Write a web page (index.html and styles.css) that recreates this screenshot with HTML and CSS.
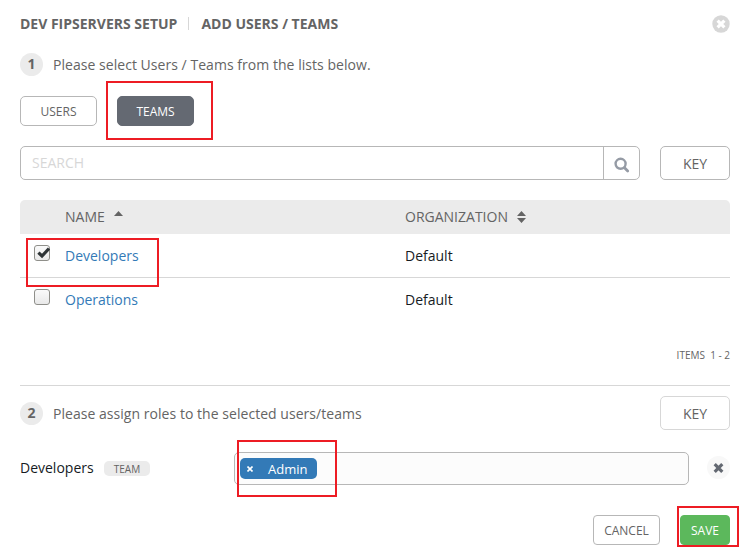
FILE: index.html
```html
<!DOCTYPE html>
<html lang="en">
<head>
<meta charset="utf-8">
<title>Add Users / Teams</title>
<link rel="stylesheet" href="styles.css">
</head>
<body>
<main class="modal">
  <header class="header">
    <h1 class="title">DEV FIPSERVERS SETUP<span class="separator"></span>ADD USERS / TEAMS</h1>
    <svg class="close" viewBox="0 0 18 18"><circle cx="9" cy="9" r="8.7" fill="#d7d7d7"/><path d="M5.6 5.6l6.8 6.8M12.4 5.6l-6.8 6.8" stroke="#fff" stroke-width="3.2"/></svg>
  </header>
  <section class="step step-first"><span class="number">1</span><span class="step-text">Please select Users / Teams from the lists below.</span></section>
  <nav class="tabs">
    <button class="tab">USERS</button>
    <button class="tab tab-active">TEAMS</button>
  </nav>
  <div class="search-row">
    <div class="search">
      <input class="search-input" placeholder="SEARCH">
      <span class="search-button"><svg width="16" height="16" viewBox="0 0 16 16" fill="none" stroke="#959ba5"><circle cx="6.6" cy="6.8" r="5" stroke-width="2.4"/><path d="M10.5 10.7l3.2 3.2" stroke-width="2.8" stroke-linecap="round"/></svg></span>
    </div>
    <button class="key">KEY</button>
  </div>
  <div class="table">
    <div class="row table-head">
      <span></span>
      <span>NAME<svg class="sort-up" width="9" height="5" viewBox="0 0 9 5"><path d="M0 5L4.5 0 9 5z"/></svg></span>
      <span>ORGANIZATION<svg class="sort" width="9" height="12" viewBox="0 0 9 12"><path d="M0 5L4.5 0 9 5zM0 7h9l-4.5 5z"/></svg></span>
    </div>
    <div class="row">
      <span class="checkbox"><svg width="15" height="14" viewBox="0 0 15 14"><path d="M3.4 6.6l3.6 3.4L14 2.6" fill="none" stroke="#2e3436" stroke-width="3.2"/></svg></span>
      <a class="link">Developers</a><span>Default</span>
    </div>
    <div class="row row-last">
      <span class="checkbox"></span>
      <a class="link">Operations</a><span>Default</span>
    </div>
  </div>
  <div class="items">ITEMS&nbsp; 1 - 2</div>
  <section class="roles-head">
    <div class="step"><span class="number">2</span><span class="step-text">Please assign roles to the selected users/teams</span></div>
    <button class="key key-light">KEY</button>
  </section>
  <section class="role">
    <span class="role-name">Developers</span><span class="badge">TEAM</span>
    <div class="select"><span class="tag"><svg width="6" height="6" viewBox="0 0 6 6"><path d="M.5 .5l5 5M5.5 .5l-5 5" stroke="#fff" stroke-width="1.6"/></svg><span class="tag-text">Admin</span></span></div>
    <span class="remove"><svg width="11" height="10" viewBox="0 0 11 10"><path d="M1.7 1.2l7.6 7.6M9.3 1.2L1.7 8.8" stroke="#646972" stroke-width="3.2"/></svg></span>
  </section>
  <footer class="footer"><button class="action">CANCEL</button><button class="action save">SAVE</button></footer>
  <i class="mark mark-tab"></i><i class="mark mark-row"></i><i class="mark mark-role"></i><i class="mark mark-save"></i>
</main>
</body>
</html>
```
FILE: styles.css
```css
* { box-sizing: border-box; }
body { margin: 0; background: #fff; font: 14px/20px "Open Sans", "Noto Sans", sans-serif; color: #646464; }
button { font: inherit; color: #646464; background: #fff; border: 1px solid #b7b7b7; border-radius: 5px; padding: 2px 0 0; }
.modal { position: relative; width: 745px; height: 555px; padding: 14px 15px 0 20px; overflow: hidden; }
.header { display: flex; justify-content: space-between; height: 20px; width: 710px; }
.title { margin: 0; font-size: 14px; line-height: 20px; font-weight: 700; display: flex; align-items: center; }
.separator { width: 1px; height: 13px; background: #d7d7d7; margin: 0 12px 2px 11px; }
.close { width: 18px; height: 18px; margin-top: 1px; }
.step { display: flex; align-items: center; height: 24px; }
.step-first { margin-top: 19px; }
.step-text { letter-spacing: .04px; }
.number { width: 23px; height: 23px; margin: 0 10px 1px 0; border-radius: 50%; background: #ebebeb; text-align: center; font-weight: 700; line-height: 22px; }
.tabs { display: flex; gap: 20px; margin-top: 19px; }
.tab { width: 77px; height: 30px; font-size: 12px; }
.tab-active { background: #646972; border-color: #646972; color: #fff; }
.search-row { display: flex; gap: 20px; margin-top: 20px; }
.search { display: flex; width: 620px; height: 34px; border: 1px solid #b7b7b7; border-radius: 5px; }
.search-input { flex: 1; border: 0; background: transparent; padding: 0 11px; font: inherit; outline: 0; }
.search-input::placeholder { color: #d7d7d7; opacity: 1; }
.search-button { width: 36px; border-left: 1px solid #b7b7b7; padding: 10px 0 0 10px; line-height: 0; }
.key { width: 70px; height: 34px; }
.key-light { border-color: #d7d7d7; }
.table { width: 710px; margin-top: 20px; color: #161b1f; }
.row { display: grid; grid-template-columns: 45px 340px 1fr; height: 44px; line-height: 44px; border-bottom: 1px solid #d7d7d7; }
.row-last { border-bottom: 0; }
.table-head { height: 34px; line-height: 34px; background: #ebebeb; border: 0; border-radius: 5px 5px 0 0; color: #646464; }
.table-head svg { fill: #646464; }
.sort-up { margin-left: 9px; vertical-align: 6px; }
.sort { margin-left: 9px; vertical-align: -1px; }
.link { color: #337ab7; }
.checkbox { width: 16px; height: 16px; margin: 11px 0 0 14px; border: 1px solid #8f8f8a; border-radius: 3px; background: linear-gradient(#fafafa, #e9e9e9); line-height: 0; }
.items { width: 710px; margin-top: 23px; height: 20px; text-align: right; font-size: 10px; }
.roles-head { display: flex; justify-content: space-between; width: 710px; margin-top: 20px; border-top: 1px solid #d7d7d7; padding-top: 10px; }
.roles-head .step { margin-top: 6px; }
.role { display: flex; align-items: center; width: 710px; height: 33px; margin-top: 22px; }
.role-name { width: 74px; color: #161b1f; line-height: 32px; margin-bottom: 2px; }
.badge { width: 46px; height: 15px; margin: 0 84px 0 10px; border-radius: 5px; background: #ebebeb; font-size: 10px; line-height: 16px; text-align: center; }
.select { width: 455px; height: 33px; padding: 5px; border: 1px solid #b7b7b7; border-radius: 5px; background: #fcfcfc; }
.tag { display: flex; align-items: center; width: 77px; height: 21px; padding-left: 7px; border-radius: 5px; background: #337ab7; color: #fff; font-size: 13px; }
.tag-text { margin-left: 15px; }
.remove { width: 23px; height: 23px; margin: 0 0 2px 18px; border-radius: 50%; background: #f8f8f8; display: flex; align-items: center; justify-content: center; }
.footer { display: flex; justify-content: flex-end; gap: 20px; width: 710px; margin-top: 30px; }
.action { width: 67px; height: 30px; font-size: 12px; border-radius: 4px; }
.save { width: 50px; background: #5cb85c; border-color: #5cb85c; color: #fff; }
.mark { position: absolute; border: 2px solid #ed1c24; }
.mark-tab { left: 106px; top: 81px; width: 107px; height: 59px; }
.mark-row { left: 26px; top: 238px; width: 133px; height: 49px; }
.mark-role { left: 237px; top: 440px; width: 100px; height: 57px; }
.mark-save { left: 677px; top: 506px; width: 62px; height: 41px; }
```
